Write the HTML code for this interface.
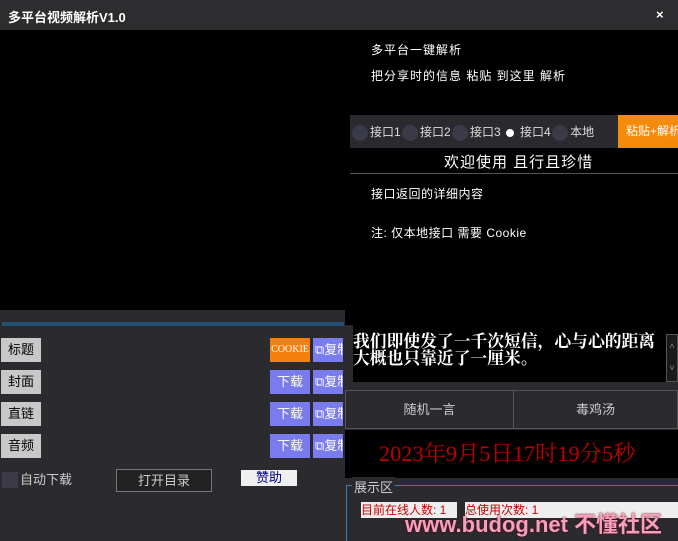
<!DOCTYPE html>
<html><head><meta charset="utf-8"><style>
*{margin:0;padding:0;box-sizing:border-box}
body{width:678px;height:541px;background:#000;position:relative;overflow:hidden;font-family:"Liberation Sans","Noto Sans CJK SC",sans-serif;color:#fff;font-size:12px}
.a{position:absolute}
.lb{background:#c8c8c8;color:#000;font-size:13px;text-align:center;line-height:24px;width:40px;height:24px;left:1px}
.dl{background:#7b7bf0;color:#fff;font-size:13px;text-align:center;line-height:24px;width:40px;height:24px;left:270px}
.cp{background:#7b7bf0;color:#fff;font-size:13px;line-height:24px;width:30px;height:24px;left:313px;padding-left:2px;white-space:nowrap;overflow:hidden}
.r{display:inline-block;width:16px;height:16px;border-radius:50%;background:#3a3a48;vertical-align:middle;margin-right:2px}
</style></head><body>
<div class="a" style="left:0;top:0;width:678px;height:30px;background:#2d2d30"></div>
<div class="a" style="left:8px;top:7px;font-size:13px;font-weight:bold">多平台视频解析V1.0</div>
<div class="a" style="left:656px;top:7px;font-size:13px;font-weight:bold">×</div>
<div class="a" style="left:371px;top:41px;font-size:12px;letter-spacing:1px">多平台一键解析</div>
<div class="a" style="left:371px;top:67px;font-size:12px;letter-spacing:1px">把分享时的信息 粘贴 到这里 解析</div>
<div class="a" style="left:350px;top:115px;width:328px;height:33px;background:#2a2a2e"></div>
<div class="a" style="left:352px;top:123px;font-size:12px;color:#ddd;white-space:nowrap;word-spacing:-2px"><span class="r"></span>接口1 <span class="r"></span>接口2 <span class="r"></span>接口3 <span class="r" style="background:#2a2a2e;position:relative"><span style="position:absolute;left:4px;top:4px;width:8px;height:8px;border-radius:50%;background:#fff"></span></span>接口4 <span class="r"></span>本地</div>
<div class="a" style="left:618px;top:115px;width:60px;height:33px;background:#f58a0b;line-height:33px;font-size:12px;padding-left:8px;white-space:nowrap;overflow:hidden">粘贴+解析</div>
<div class="a" style="left:444px;top:151px;font-size:15px;letter-spacing:1px">欢迎使用 且行且珍惜</div>
<div class="a" style="left:350px;top:173px;width:328px;height:1px;background:#555"></div>
<div class="a" style="left:371px;top:185px;letter-spacing:0.5px">接口返回的详细内容</div>
<div class="a" style="left:371px;top:224px;letter-spacing:0.5px">注: 仅本地接口 需要 Cookie</div>
<div class="a" style="left:0;top:310px;width:345px;height:231px;background:#2b2a2f"></div>
<div class="a" style="left:2px;top:322px;width:342px;height:4px;background:#24506f"></div>
<div class="a lb" style="top:338px">标题</div>
<div class="a lb" style="top:370px">封面</div>
<div class="a lb" style="top:402px">直链</div>
<div class="a lb" style="top:434px">音频</div>
<div class="a dl" style="top:338px;background:#f57f0e;font-size:10px;font-family:'Liberation Serif',serif">COOKIE</div>
<div class="a dl" style="top:370px">下载</div>
<div class="a dl" style="top:402px">下载</div>
<div class="a dl" style="top:434px">下载</div>
<div class="a cp" style="top:338px">⧉复制</div>
<div class="a cp" style="top:370px">⧉复制</div>
<div class="a cp" style="top:402px">⧉复制</div>
<div class="a cp" style="top:434px">⧉复制</div>
<div class="a" style="left:2px;top:472px;width:16px;height:16px;background:#3a3a48"></div>
<div class="a" style="left:20px;top:472px;font-size:13px;color:#ccc;line-height:16px">自动下载</div>
<div class="a" style="left:116px;top:469px;width:96px;height:23px;border:1px solid #777;background:#222;color:#ccc;text-align:center;line-height:21px;font-size:13px">打开目录</div>
<div class="a" style="left:241px;top:470px;width:56px;height:16px;background:#f0f0f0;color:#00008b;text-align:center;line-height:16px;font-size:13px">赞助</div>
<div class="a" style="left:345px;top:382px;width:333px;height:48px;background:#2b2a2f"></div>
<div class="a" style="left:345px;top:325px;width:8px;height:60px;background:#2b2a2f"></div>
<div class="a" style="left:353px;top:333px;font-size:16.8px;font-weight:bold;line-height:17px;font-family:'Liberation Serif','Noto Serif CJK SC',serif;white-space:nowrap">我们即使发了一千次短信，心与心的距离<br>大概也只靠近了一厘米。</div>
<div class="a" style="left:666px;top:334px;width:12px;height:48px;background:#1a1a1a;border:1px solid #555;color:#888;font-size:9px;text-align:center;line-height:22px">˄<br>˅</div>
<div class="a" style="left:345px;top:390px;width:169px;height:39px;border:1px solid #555;text-align:center;line-height:37px;font-size:13px;color:#ccc">随机一言</div>
<div class="a" style="left:513px;top:390px;width:165px;height:39px;border:1px solid #555;text-align:center;line-height:37px;font-size:13px;color:#ccc">毒鸡汤</div>
<div class="a" style="left:379px;top:436px;font-size:22.3px;color:#c00000;font-family:'Liberation Serif','Noto Serif CJK SC',serif;white-space:nowrap">2023年9月5日17时19分5秒</div>
<div class="a" style="left:345px;top:478px;width:333px;height:63px;background:#2b2a2f"></div>
<div class="a" style="left:346px;top:485px;width:332px;height:56px;border-top:1px solid #3a7fb5;border-left:1px solid #3a7fb5"></div>
<div class="a" style="left:352px;top:477px;font-size:13px;color:#ccc;background:#2b2a2f;padding:0 2px">展示区</div>
<div class="a" style="left:361px;top:502px;width:96px;height:16px;background:#eee;color:#c00;font-size:12px;line-height:16px;white-space:nowrap">目前在线人数: 1</div>
<div class="a" style="left:465px;top:502px;width:213px;height:16px;background:#eee;color:#c00;font-size:12px;line-height:16px">总使用次数: 1</div>
<div class="a" style="left:405px;top:507px;font-size:22px;font-weight:bold;color:#f3a0c0;white-space:nowrap;text-shadow:0 0 2px #600">www.budog.net 不懂社区</div>
</body></html>
